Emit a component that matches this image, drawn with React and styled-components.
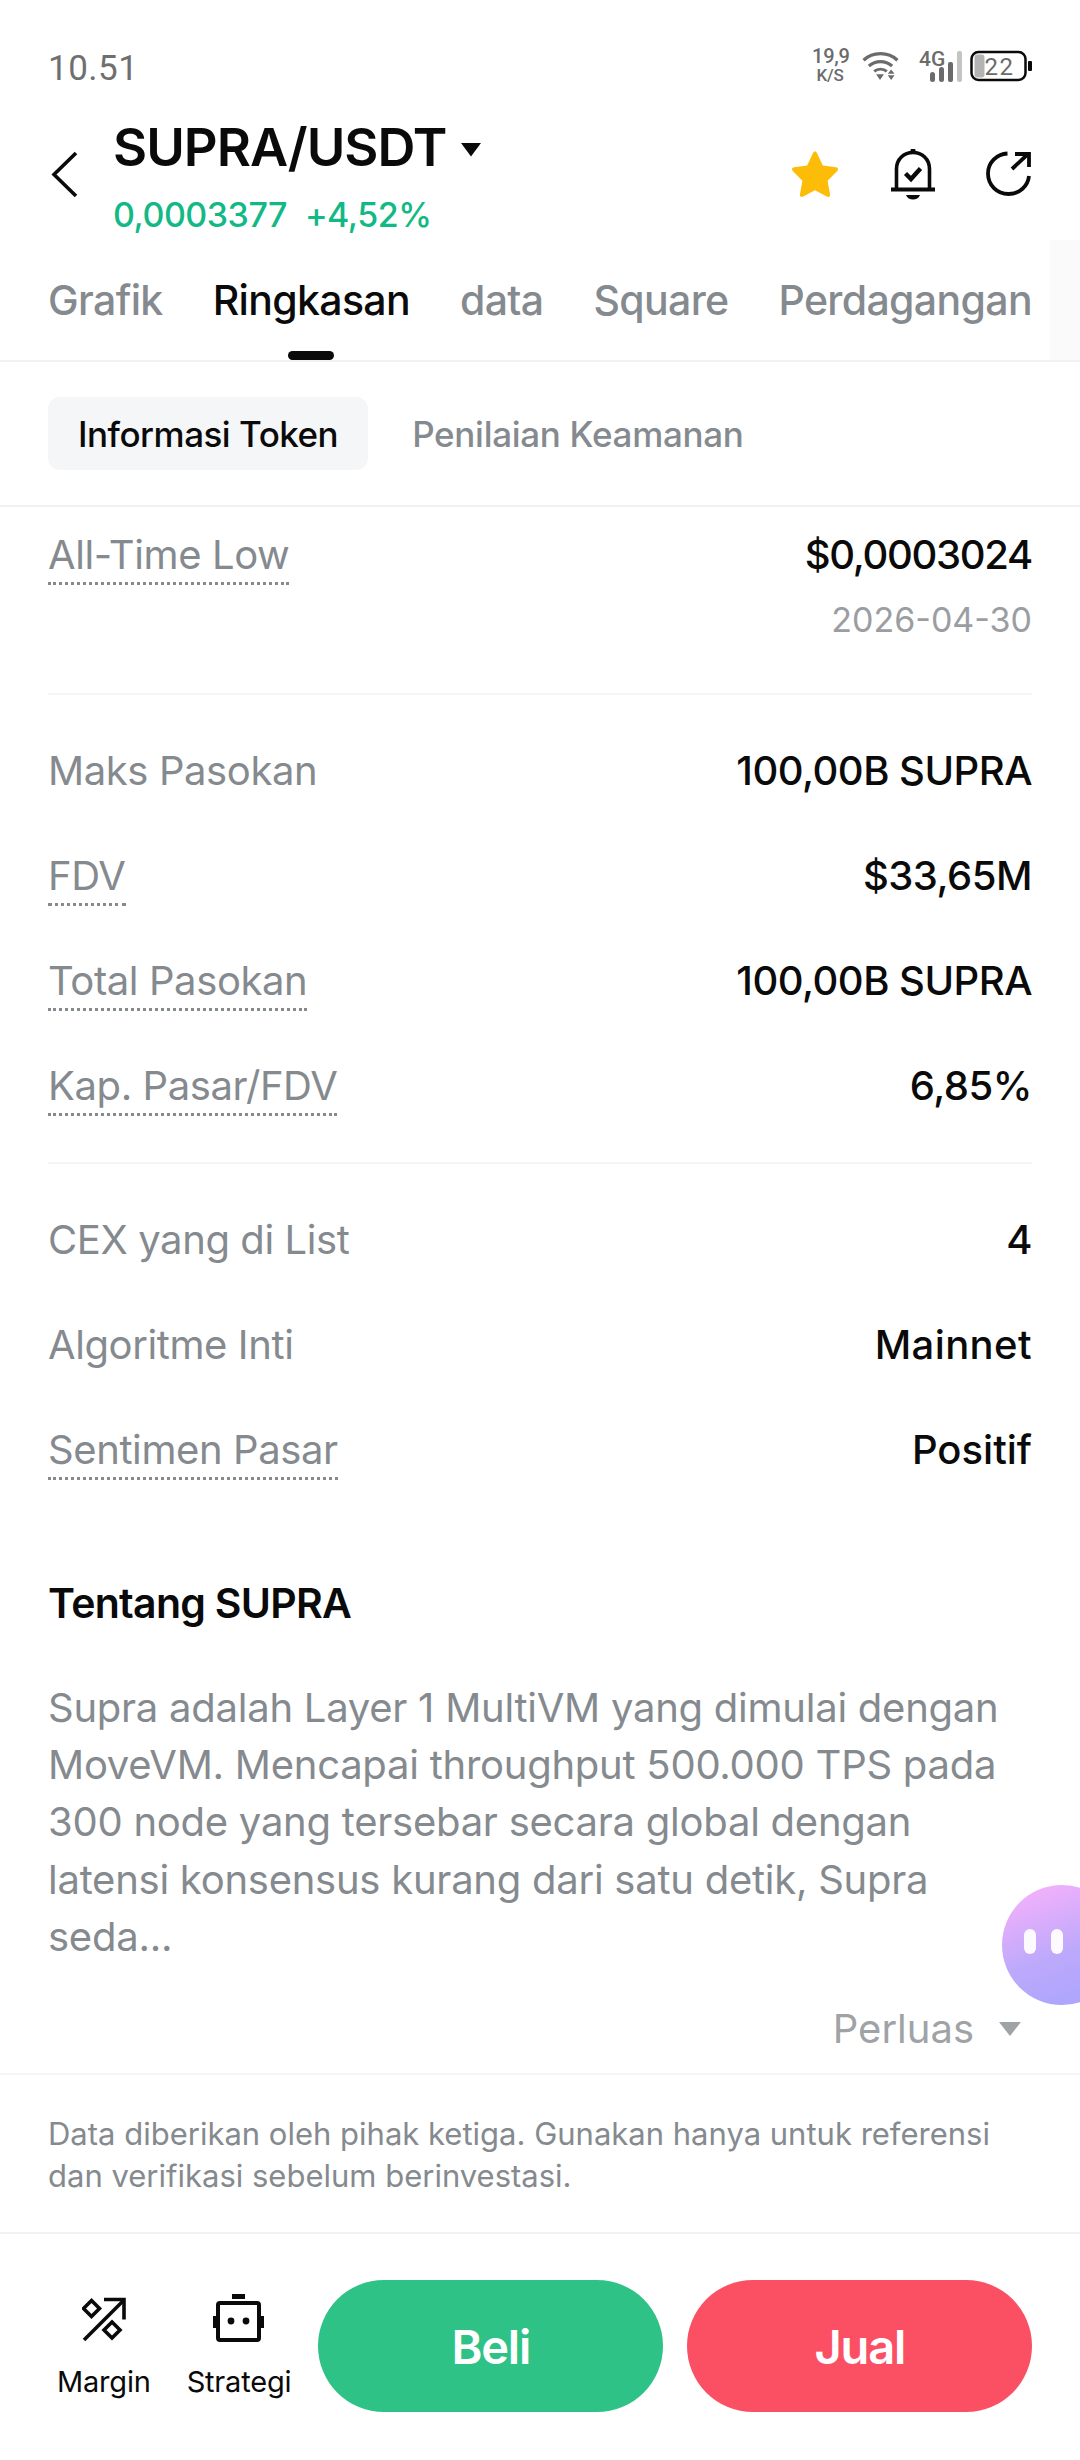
import React from "react";
import styled, { createGlobalStyle } from "styled-components";

const GlobalStyle = createGlobalStyle`
  * { box-sizing: border-box; }
  html, body { margin: 0; padding: 0; background: #fff; }
  body { font-family: Inter, "Liberation Sans", sans-serif; }
`;

const Page = styled.div`
  position: relative;
  width: 1080px;
  height: 2460px;
  overflow: hidden;
  background: #fff;
  color: #0a0a0a;
  display: flex;
  flex-direction: column;
`;

const StatusBar = styled.div`
  height: 100px;
  padding: 45px 47px 0 48px;
  display: flex;
  justify-content: space-between;
  align-items: flex-start;
`;

const Clock = styled.span`
  font-family: Roboto, sans-serif;
  font-size: 35px;
  line-height: 48px;
  color: #6f6f6f;
  letter-spacing: 0.5px;
`;

const StatusIcons = styled.div`
  display: flex;
  align-items: center;
  height: 36px;
  margin-top: 3px;
`;

const Speed = styled.div`
  font-family: Roboto, sans-serif;
  font-weight: 500;
  color: #6b6b6b;
  text-align: center;
  font-size: 20px;
  line-height: 19px;
  letter-spacing: -0.2px;
  width: 36px;
  margin-right: 14px;
  white-space: nowrap;
  & small {
    display: block;
    font-size: 17px;
    line-height: 19px;
  }
`;

const WifiSlot = styled.div`
  display: flex;
  margin-right: 19px;
`;

const SignalSlot = styled.div`
  position: relative;
  display: flex;
  margin-right: 8px;
`;

const NetworkType = styled.span`
  position: absolute;
  left: 1px;
  top: 0;
  font-family: Roboto, sans-serif;
  font-size: 21px;
  line-height: 21px;
  font-weight: 500;
  color: #6b6b6b;
`;

const Header = styled.div`
  height: 132px;
  display: flex;
  align-items: flex-start;
  padding: 0 48px;
`;

const BackButton = styled.div`
  width: 65px;
  display: flex;
  margin-top: 51px;
  margin-left: 2px;
  margin-right: -2px;
`;

const PairInfo = styled.div`
  flex: 1;
  display: flex;
  flex-direction: column;
  padding-top: 15px;
`;

const PairRow = styled.div`
  display: flex;
  align-items: center;
  gap: 14px;
  & svg { margin-top: 5px; }
`;

const PairName = styled.span`
  font-size: 52.5px;
  line-height: 64px;
  font-weight: 600;
  letter-spacing: -1px;
`;

const PriceRow = styled.div`
  display: flex;
  gap: 18px;
  margin-top: 14px;
  font-size: 34px;
  line-height: 44px;
  font-weight: 500;
  color: #12b886;
  letter-spacing: -0.5px;
`;

const Actions = styled.div`
  display: flex;
  align-items: center;
  gap: 50px;
  margin-top: 48px;
`;

const Tabs = styled.div`
  height: 130px;
  padding: 0 48px;
  display: flex;
  gap: 50px;
  border-bottom: 2px solid #f0f1f2;
  position: relative;
`;

const Tab = styled.div`
  position: relative;
  padding-top: 40px;
  font-size: 41px;
  line-height: 56px;
  letter-spacing: -0.65px;
  font-weight: 500;
  white-space: nowrap;
  color: ${(p) => (p.$active ? "#0a0a0a" : "#858a8f")};

  &::after {
    content: "";
    display: ${(p) => (p.$active ? "block" : "none")};
    position: absolute;
    left: 50%;
    bottom: 0;
    width: 46px;
    height: 9px;
    margin-left: -23px;
    border-radius: 5px;
    background: #0a0a0a;
  }
`;

const TabFade = styled.div`
  position: absolute;
  top: 8px;
  right: 0;
  width: 30px;
  height: 120px;
  background: #fafafa;
`;

const SubTabs = styled.div`
  height: 145px;
  padding: 35px 48px 0;
  display: flex;
  gap: 44px;
  border-bottom: 2px solid #f0f1f2;
`;

const SubTab = styled.div`
  height: 73px;
  padding: ${(p) => (p.$active ? "0 30px" : "0")};
  border-radius: 12px;
  display: flex;
  align-items: center;
  font-size: 35px;
  font-weight: 500;
  letter-spacing: ${(p) => (p.$active ? "-0.5px" : "-0.3px")};
  background: ${(p) => (p.$active ? "#f5f6f7" : "transparent")};
  color: ${(p) => (p.$active ? "#0a0a0a" : "#858a8f")};
`;

const Section = styled.div`
  padding: 0 48px;
`;

const LowBlock = styled.div`
  padding: 23px 0 48px;
  border-bottom: 2px solid #f4f5f5;
  display: flex;
  justify-content: space-between;
  align-items: flex-start;
`;

const Group = styled.div`
  padding: ${(p) => p.$pad};
  border-bottom: ${(p) => (p.$line ? "2px solid #f4f5f5" : "none")};
`;

const Row = styled.div`
  height: 105px;
  display: flex;
  justify-content: space-between;
  align-items: center;
`;

const Label = styled.span`
  font-size: 40px;
  line-height: 50px;
  letter-spacing: -0.4px;
  color: #858a8f;
  ${(p) =>
    p.$dotted &&
    `
    padding-bottom: 2px;
    margin-bottom: -5px;
    border-bottom: 3px dotted #858a8f;
  `}
`;

const Value = styled.span`
  font-size: 40px;
  line-height: 50px;
  font-weight: 500;
  letter-spacing: ${(p) => p.$track || "-0.5px"};
  color: #0a0a0a;
`;

const LowRight = styled.div`
  display: flex;
  flex-direction: column;
  align-items: flex-end;
  gap: 15px;
`;

const LowDate = styled.span`
  font-size: 34px;
  line-height: 50px;
  color: #9a9ea2;
`;

const AboutTitle = styled.div`
  margin-top: 71px;
  font-size: 41px;
  line-height: 60px;
  font-weight: 600;
  letter-spacing: -0.7px;
`;

const AboutText = styled.p`
  margin: 46px 0 0;
  font-size: 40px;
  line-height: 57.2px;
  letter-spacing: -0.25px;
  color: #858a8f;
`;

const Expand = styled.div`
  margin-top: 39px;
  display: flex;
  justify-content: flex-end;
  align-items: center;
  gap: 24px;
  padding-right: 10px;
  font-size: 40px;
  line-height: 50px;
  color: #a0a3a6;
`;

const Disclaimer = styled.div`
  margin-top: 19px;
  height: 161px;
  padding: 38px 48px 0;
  border-top: 2px solid #f4f5f5;
  border-bottom: 2px solid #f0f1f2;
  font-size: 31px;
  line-height: 42px;
  color: #858a8f;
`;

const BottomBar = styled.div`
  flex: 1;
  display: flex;
  align-items: flex-start;
  padding: 46px 48px 0 57px;
  gap: 36px;
`;

const ToolButton = styled.div`
  margin-top: 14px;
  display: flex;
  flex-direction: column;
  align-items: center;
  font-size: 29px;
  line-height: 36px;
  letter-spacing: -0.2px;
  white-space: nowrap;
`;

const ToolIcon = styled.div`
  height: 48px;
  margin-bottom: 22px;
  display: flex;
  align-items: flex-end;
`;

const TradeRow = styled.div`
  display: flex;
  gap: 24px;
  margin-left: -9px;
`;

const TradeButton = styled.div`
  width: 345px;
  height: 132px;
  border-radius: 66px;
  display: flex;
  align-items: center;
  justify-content: center;
  font-size: 47px;
  font-weight: 600;
  letter-spacing: -1.2px;
  color: #fff;
  background: ${(p) => p.$bg};
`;

const Assistant = styled.div`
  position: absolute;
  left: 1002px;
  top: 1885px;
  width: 120px;
  height: 120px;
  border-radius: 50%;
  background: linear-gradient(160deg, #fdb2fb 0%, #bda9fb 55%, #a8a4ff 100%);
  display: flex;
  gap: 15px;
  padding: 44px 0 0 22px;
  & i {
    width: 12px;
    height: 25px;
    border-radius: 6px;
    background: #fdfaff;
  }
`;

const Caret = () => (
  <svg width="22" height="15" viewBox="0 0 22 15">
    <path d="M1 1h20L11 14.500z" fill="#0a0a0a" />
  </svg>
);

const Back = () => (
  <svg width="30" height="48" viewBox="0 0 30 48" fill="none" stroke="#0a0a0a" strokeWidth="3.600">
    <path d="M26 2 4 23.500 26 45" />
  </svg>
);

const Star = () => (
  <svg width="50" height="48" viewBox="0 0 50 48">
    <path
      d="M25 1.500c1 0 1.600.6 2.100 1.700l5.700 12.200 13.200 1.900c2.200.4 2.800 2.200 1.200 3.800l-9.600 9.600 2.400 13.600c.4 2.300-1.300 3.400-3.300 2.300L25 40.300l-11.700 6.300c-2 1.100-3.700 0-3.300-2.300l2.400-13.600-9.600-9.600c-1.600-1.600-1-3.400 1.200-3.800l13.200-1.900 5.700-12.200c.5-1.100 1.100-1.700 2.100-1.700z"
      fill="#fdbc08"
    />
  </svg>
);

const Bell = () => (
  <svg width="46" height="52" viewBox="0 0 46 52" fill="none" stroke="#0a0a0a">
    <path d="M6.500 41V21C6.500 11 14 4.500 23 4.500S39.500 11 39.500 21v20" strokeWidth="3.600" />
    <path d="M1 41.500h44" strokeWidth="4" />
    <path d="M21 1.500h4v3h-4z" fill="#0a0a0a" strokeWidth="1" />
    <path d="M16 47h14c-1 3-4 4.500-7 4.500s-6-1.500-7-4.500z" fill="#0a0a0a" stroke="none" />
    <path d="m15.500 25.500 5.500 5.500 9.500-10.500" strokeWidth="4.400" />
  </svg>
);

const Share = () => (
  <svg width="46" height="46" viewBox="0 0 46 46" fill="none" stroke="#0a0a0a" strokeWidth="3.800">
    <path d="M21.500 2.500C10.500 3 2 11.700 2 22.500 2 34 11 43 22.500 43 33.500 43 42 35 43 25" />
    <path d="M26 18 42 3" />
    <path d="M29 3h14v13" />
  </svg>
);

const Wifi = () => (
  <svg width="37" height="30" viewBox="0 0 38 31" fill="none" stroke="#6b6b6b">
    <path d="M1.500 9.500C11 .5 27 .5 36.500 9.500" strokeWidth="3.400" />
    <path d="M7 15.500c7-6 17-6 24 0" strokeWidth="3.400" />
    <path d="M12.500 21c3.500-3 9.500-3 13 0" strokeWidth="3" />
    <path d="M14.500 24h8l-4 6zM30 19l3.500 4.500h-7zM26.500 25h7L30 30z" fill="#6b6b6b" stroke="none" />
  </svg>
);

const Signal = () => (
  <svg width="44" height="34" viewBox="0 0 44 34" fill="#6b6b6b">
    <rect x="12" y="23" width="5" height="10" rx="2.500" />
    <rect x="21" y="18" width="5" height="15" rx="2.500" />
    <rect x="30" y="13" width="5" height="20" rx="2" />
    <rect x="39" y="2" width="5" height="31" rx="2" fill="#c4c4c4" />
  </svg>
);

const Battery = () => (
  <svg width="63" height="34" viewBox="0 0 63 34">
    <rect x="1.500" y="3" width="54" height="28" rx="7" fill="none" stroke="#0a0a0a" strokeWidth="2.500" />
    <rect x="4.500" y="5.500" width="10" height="23" rx="3" fill="#b3b3b3" />
    <rect x="58" y="12" width="4" height="10" rx="1" fill="#0a0a0a" />
    <text x="14.500" y="26" fontFamily="Roboto, sans-serif" fontSize="24" letterSpacing="1.500" fill="#6b6b6b">22</text>
  </svg>
);

const MarginIcon = () => (
  <svg width="44" height="45" viewBox="0 0 44 45" fill="none" stroke="#0a0a0a" strokeWidth="3.600">
    <path d="M2 43 41 4" />
    <path d="M22 2.500h20v20" />
    <path d="m9.500 3.500 8 8-8 8-8-8zM30 25l8 8-8 8-8-8z" />
  </svg>
);

const RobotIcon = () => (
  <svg width="51" height="48" viewBox="0 0 51 48">
    <path d="M19 0h13v5H19z" fill="#0a0a0a" />
    <rect x="5" y="9" width="41" height="37" rx="2" fill="none" stroke="#0a0a0a" strokeWidth="4" />
    <path d="M0 22h3v12H0zM48 22h3v12h-3z" fill="#0a0a0a" />
    <circle cx="18" cy="27" r="3.400" fill="#0a0a0a" />
    <circle cx="33" cy="27" r="3.400" fill="#0a0a0a" />
  </svg>
);

const App = () => {
  return (
    <Page>
      <GlobalStyle />
      <StatusBar>
        <Clock>10.51</Clock>
        <StatusIcons>
          <Speed>
            19,9
            <small>K/S</small>
          </Speed>
          <WifiSlot>
            <Wifi />
          </WifiSlot>
          <SignalSlot>
            <Signal />
            <NetworkType>4G</NetworkType>
          </SignalSlot>
          <Battery />
        </StatusIcons>
      </StatusBar>

      <Header>
        <BackButton>
          <Back />
        </BackButton>
        <PairInfo>
          <PairRow>
            <PairName>SUPRA/USDT</PairName>
            <Caret />
          </PairRow>
          <PriceRow>
            <span>0,0003377</span>
            <span>+4,52%</span>
          </PriceRow>
        </PairInfo>
        <Actions>
          <Star />
          <Bell />
          <Share />
        </Actions>
      </Header>

      <Tabs>
        <Tab>Grafik</Tab>
        <Tab $active>Ringkasan</Tab>
        <Tab>data</Tab>
        <Tab>Square</Tab>
        <Tab>Perdagangan</Tab>
        <TabFade />
      </Tabs>

      <SubTabs>
        <SubTab $active>Informasi Token</SubTab>
        <SubTab>Penilaian Keamanan</SubTab>
      </SubTabs>

      <Section>
        <LowBlock>
          <Label $dotted>All-Time Low</Label>
          <LowRight>
            <Value $track="-1.300px">$0,0003024</Value>
            <LowDate>2026-04-30</LowDate>
          </LowRight>
        </LowBlock>

        <Group $pad="23px 0 24px" $line>
          <Row>
            <Label>Maks Pasokan</Label>
            <Value>100,00B SUPRA</Value>
          </Row>
          <Row>
            <Label $dotted>FDV</Label>
            <Value>$33,65M</Value>
          </Row>
          <Row>
            <Label $dotted>Total Pasokan</Label>
            <Value>100,00B SUPRA</Value>
          </Row>
          <Row>
            <Label $dotted>Kap. Pasar/FDV</Label>
            <Value>6,85%</Value>
          </Row>
        </Group>

        <Group $pad="23px 0 0">
          <Row>
            <Label>CEX yang di List</Label>
            <Value>4</Value>
          </Row>
          <Row>
            <Label>Algoritme Inti</Label>
            <Value $track="0.400px">Mainnet</Value>
          </Row>
          <Row>
            <Label $dotted>Sentimen Pasar</Label>
            <Value $track="0">Positif</Value>
          </Row>
        </Group>

        <AboutTitle>Tentang SUPRA</AboutTitle>
        <AboutText>
          Supra adalah Layer 1 MultiVM yang dimulai dengan
          <br />
          MoveVM. Mencapai throughput 500.000 TPS pada
          <br />
          300 node yang tersebar secara global dengan
          <br />
          latensi konsensus kurang dari satu detik, Supra
          <br />
          seda...
        </AboutText>
        <Expand>
          Perluas
          <svg width="24" height="16" viewBox="0 0 24 16">
            <path d="M1 1h22L12 15z" fill="#a0a3a6" />
          </svg>
        </Expand>
      </Section>

      <Disclaimer>
        Data diberikan oleh pihak ketiga. Gunakan hanya untuk referensi
        <br />
        dan verifikasi sebelum berinvestasi.
      </Disclaimer>

      <BottomBar>
        <ToolButton>
          <ToolIcon>
            <MarginIcon />
          </ToolIcon>
          Margin
        </ToolButton>
        <ToolButton>
          <ToolIcon>
            <RobotIcon />
          </ToolIcon>
          Strategi
        </ToolButton>
        <TradeRow>
          <TradeButton $bg="#2ec287">Beli</TradeButton>
          <TradeButton $bg="#fb5064">Jual</TradeButton>
        </TradeRow>
      </BottomBar>

      <Assistant>
        <i />
        <i />
      </Assistant>
    </Page>
  );
};

export default App;
